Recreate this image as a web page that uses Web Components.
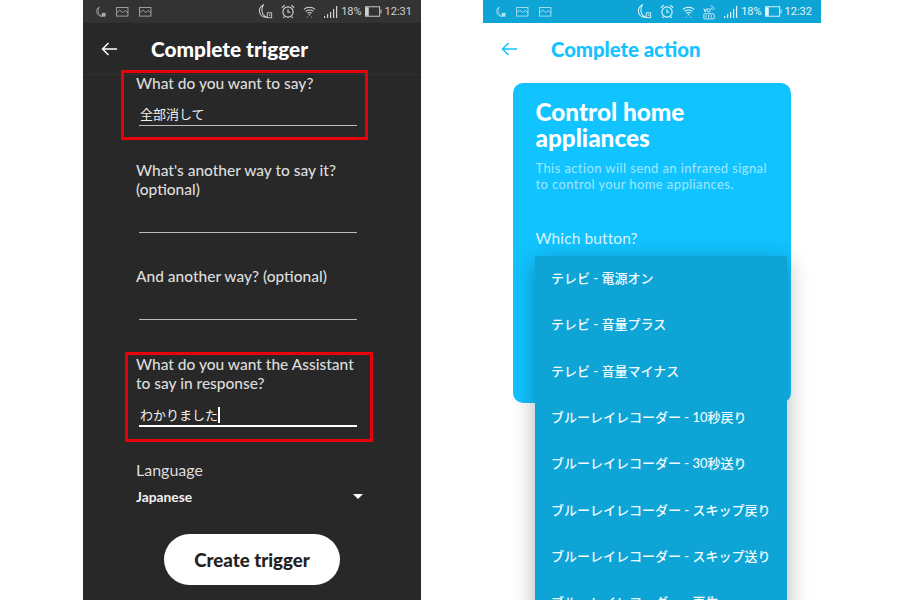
<!DOCTYPE html>
<html lang="en">
<head>
<meta charset="utf-8">
<title>Complete trigger and action</title>
<style>
    html, body { margin: 0; height: 100%; background: #fff; overflow: hidden; }
    body { font-family: Lato, "Noto Sans CJK JP", sans-serif; }
    .page { display: flex; height: 600px; padding-left: 83px; gap: 62px; }
</style>
</head>
<body>
<div class="page">
    <phone-screen style="--bg:#282828">
        <status-bar time="12:31" color="#d0d0d0" bg="#333333"></status-bar>
        <app-header title="Complete trigger" color="#ffffff" size="20.8"></app-header>
        <trigger-form></trigger-form>
    </phone-screen>
    <phone-screen style="--bg:#ffffff">
        <status-bar time="12:32" color="#e4f5fb" bg="#0ea5d6" volte></status-bar>
        <app-header title="Complete action" color="#11c3ff" size="20.3"></app-header>
        <action-card></action-card>
    </phone-screen>
</div>

<script>
const moonIcon = `<svg width="11" height="12" viewBox="0 0 13 14" fill="none" stroke="currentColor" stroke-width="1">
    <path d="M5 1C2.500 2.500 1.500 5 2 7.500C2.600 10.500 5.500 12.500 8.500 12C6 11.500 4 9.500 3.800 6.500C3.700 4.500 4 2.500 5 1Z"/>
    <rect x="8" y="8" width="4.500" height="4.500" fill="currentColor" stroke="none"/></svg>`;
const pictureIcon = `<svg width="13" height="10" viewBox="0 0 14 11" fill="none" stroke="currentColor" stroke-width="1">
    <rect x="0.500" y="0.500" width="12.500" height="9.500"/>
    <path d="M1 6L4 3.500L7 6L10 4L13 6.500"/></svg>`;
const moonBigIcon = `<svg width="15" height="15" viewBox="0 0 17 17" fill="none" stroke="currentColor" stroke-width="1.200">
    <path d="M6 1C2.500 3 1 6.500 2 10C3 13.500 6.500 15.500 10 15C7 14 4.800 11.500 4.500 8C4.300 5.500 4.800 3 6 1Z"/>
    <rect x="10.500" y="10" width="5" height="5.500" stroke-width="1"/><path d="M13 11.500V13H14.200" stroke-width="0.800"/></svg>`;
const alarmIcon = `<svg width="14" height="15" viewBox="0 0 15 16" fill="none" stroke="currentColor" stroke-width="1.200">
    <circle cx="7.500" cy="8.500" r="5.500"/><path d="M7.500 5.500V8.800H10"/>
    <path d="M1 4L4 1.200M14 4L11 1.200M3.500 13.500L2.500 15M11.500 13.500L12.500 15"/></svg>`;
const wifiIcon = `<svg width="13" height="13" viewBox="0 0 15 15" fill="none" stroke="currentColor" stroke-width="1.200">
    <path d="M1 5C4.500 1.800 10.500 1.800 14 5M3 7.300C5.500 5.200 9.500 5.200 12 7.300M5 9.500C6.500 8.400 8.500 8.400 10 9.500"/>
    <circle cx="7.500" cy="11.200" r="0.900" fill="currentColor" stroke="none"/>
    <path d="M4.500 14H5.500M9.500 14H10.500" opacity="0.700"/></svg>`;
const volteIcon = `<svg width="13" height="16" viewBox="0 0 15 18" fill="none" stroke="currentColor" stroke-width="1">
    <path d="M9 2C11 2.500 12.500 4 13 6M9 4.500C10 4.800 10.700 5.500 11 6.500"/>
    <path d="M1 5L2.500 9L4 5" stroke-width="1.100"/><circle cx="6.500" cy="7" r="1.800" stroke-width="1.100"/>
    <rect x="1" y="11" width="12" height="6" rx="1"/><path d="M3.500 12.500V15.500M6.500 12.500V15.500M9.500 12.500V15.500"/></svg>`;
const signalIcon = `<svg width="14" height="12" viewBox="0 0 14 12" fill="currentColor">
    <rect x="0" y="10" width="1.200" height="2"/><rect x="3" y="8" width="1.200" height="4"/>
    <rect x="6" y="6" width="1.200" height="6"/><rect x="9" y="3" width="1.200" height="9"/>
    <rect x="12" y="0" width="1.200" height="12"/></svg>`;
const batteryIcon = `<svg width="17" height="11" viewBox="0 0 18 11" fill="none" stroke="currentColor">
    <rect x="0.500" y="0.500" width="15" height="10"/><rect x="1" y="1" width="3" height="9" fill="currentColor" stroke="none"/>
    <rect x="16.500" y="3.500" width="1" height="4" fill="currentColor" stroke="none"/></svg>`;

class PhoneScreen extends HTMLElement {
    constructor() {
        super();
        this.attachShadow({ mode: 'open' });
        this.shadowRoot.innerHTML = `
            <style>
                :host {
                    display: flex;
                    flex-direction: column;
                    width: 338px;
                    height: 600px;
                    overflow: hidden;
                    background: var(--bg);
                    position: relative;
                }
            </style>
            <slot></slot>
        `;
    }
}

class StatusBar extends HTMLElement {
    constructor() {
        super();
        this.attachShadow({ mode: 'open' });
    }

    connectedCallback() {
        const extra = this.hasAttribute('volte') ? `<span class="icon">${volteIcon}</span>` : '';
        this.shadowRoot.innerHTML = `
            <style>
                :host {
                    display: flex;
                    align-items: center;
                    height: 23px;
                    flex: none;
                    box-sizing: border-box;
                    padding: 0 9px 0 12px;
                    font-family: Roboto, sans-serif;
                    font-size: 11px;
                    background: ${this.getAttribute('bg')};
                    color: ${this.getAttribute('color')};
                }
                .left { display: flex; align-items: center; gap: 10px; opacity: 0.75; }
                .right { display: flex; align-items: center; margin-left: auto; }
                .icon { display: flex; margin-right: 8px; }
                .signal { margin-right: 3px; }
                .pct { margin-right: 3px; }
                .bat { margin-right: 3px; }
                svg { display: block; }
            </style>
            <div class="left">${moonIcon}${pictureIcon}${pictureIcon}</div>
            <div class="right">
                <span class="icon">${moonBigIcon}</span>
                <span class="icon">${alarmIcon}</span>
                <span class="icon">${wifiIcon}</span>
                ${extra}
                <span class="icon signal">${signalIcon}</span>
                <span class="pct">18%</span>
                <span class="icon bat">${batteryIcon}</span>
                <span>${this.getAttribute('time')}</span>
            </div>
        `;
    }
}

class AppHeader extends HTMLElement {
    constructor() {
        super();
        this.attachShadow({ mode: 'open' });
    }

    connectedCallback() {
        this.shadowRoot.innerHTML = `
            <style>
                :host {
                    display: flex;
                    align-items: center;
                    height: 51px;
                    flex: none;
                    box-sizing: border-box;
                    padding-left: 18px;
                    color: ${this.getAttribute('color')};
                }
                svg { display: block; margin-right: 34px; }
                h1 { margin: 0; font-size: ${this.getAttribute('size')}px; font-weight: 900; }
            </style>
            <svg width="16" height="14" viewBox="0 0 16 14" fill="none" stroke="currentColor" stroke-width="1.500">
                <path d="M16 7H1.500M7.500 1L1.500 7L7.500 13"/>
            </svg>
            <h1>${this.getAttribute('title')}</h1>
        `;
    }
}

class TriggerField extends HTMLElement {
    constructor() {
        super();
        this.attachShadow({ mode: 'open' });
    }

    connectedCallback() {
        const active = this.hasAttribute('active');
        this.shadowRoot.innerHTML = `
            <style>
                :host { display: block; color: #dcdcdc; }
                .label { font-size: 15.500px; line-height: 19px; font-weight: 500; }
                .input {
                    margin: ${this.getAttribute('gap') || 12}px 0 0 3px;
                    width: 218px;
                    height: 23px;
                    padding-left: 1px;
                    box-sizing: border-box;
                    border-bottom: ${active ? '2px solid #ffffff' : '1px solid #bdbdbd'};
                    font-size: 13px;
                    line-height: 23px;
                    color: #f0f0f0;
                }
                .caret { display: inline-block; width: 1.500px; height: 16px; background: #fff; vertical-align: -3px; }
            </style>
            <div class="label"><slot></slot></div>
            <div class="input">${this.getAttribute('value') || ''}${active ? '<span class="caret"></span>' : ''}</div>
        `;
    }
}

class TriggerForm extends HTMLElement {
    constructor() {
        super();
        this.attachShadow({ mode: 'open' });
        this.shadowRoot.innerHTML = `
            <style>
                :host {
                    display: flex;
                    flex-direction: column;
                    flex: 1;
                    position: relative;
                    padding: 0 0 0 53px;
                    box-sizing: border-box;
                    border-top: 1px solid #303030;
                }
                .mark { position: absolute; border: 3px solid #e8000c; box-sizing: border-box; }
                .lang { font-size: 16px; line-height: 19px; color: #dcdcdc; margin-top: 33px; }
                .select {
                    display: flex;
                    justify-content: space-between;
                    align-items: center;
                    width: 227px;
                    margin-top: 8px;
                    font-size: 13.800px;
                    line-height: 19px;
                    font-weight: 700;
                    color: #f2f2f2;
                }
                .caret { width: 0; height: 0; border: 5px solid transparent; border-top: 5px solid #fff; border-bottom: 0; }
                .btn {
                    align-self: flex-start;
                    margin: 28px 0 0 28px;
                    width: 176px;
                    height: 51px;
                    border-radius: 26px;
                    background: #fff;
                    color: #222;
                    display: flex;
                    align-items: center;
                    justify-content: center;
                    font-size: 18.700px;
                    font-weight: 900;
                }
            </style>
            <trigger-field style="margin-top:-1px;margin-bottom:35px" value="全部消して" gap="10">What do you want to say?</trigger-field>
            <trigger-field style="margin-bottom:34px" gap="11">What's another way to say it?<br>(optional)</trigger-field>
            <trigger-field style="margin-bottom:35px" gap="11">And another way? (optional)</trigger-field>
            <trigger-field active value="わかりました" gap="11">What do you want the Assistant<br>to say in response?</trigger-field>
            <div class="lang">Language</div>
            <div class="select"><span>Japanese</span><span class="caret"></span></div>
            <div class="btn">Create trigger</div>
            <div class="mark" style="left:38px;top:-5px;width:247px;height:70px"></div>
            <div class="mark" style="left:42px;top:277px;width:248px;height:90px"></div>
        `;
    }
}

class ActionCard extends HTMLElement {
    constructor() {
        super();
        this.attachShadow({ mode: 'open' });
        this.shadowRoot.innerHTML = `
            <style>
                :host { display: block; flex: 1; position: relative; padding: 9px 30px 0; }
                .card {
                    width: 278px;
                    height: 320px;
                    box-sizing: border-box;
                    padding: 16px 22.500px;
                    background: #11c3ff;
                    border-radius: 10px;
                    color: #fff;
                }
                h2 { margin: 0; font-size: 24.300px; line-height: 26px; font-weight: 900; }
                p { margin: 9px 0 0; font-size: 13px; line-height: 16px; color: rgba(255,255,255,0.62); letter-spacing: 0.400px; }
                .which { margin-top: 37px; font-size: 15.500px; line-height: 19px; color: rgba(255,255,255,0.85); letter-spacing: 0.100px; }
                drop-list { position: absolute; left: 52px; top: 182px; }
            </style>
            <div class="card">
                <h2>Control home<br>appliances</h2>
                <p>This action will send an infrared signal<br>to control your home appliances.</p>
                <div class="which">Which button?</div>
            </div>
            <drop-list></drop-list>
        `;
    }
}

class DropList extends HTMLElement {
    constructor() {
        super();
        this.attachShadow({ mode: 'open' });
        const items = [
            'テレビ - 電源オン',
            'テレビ - 音量プラス',
            'テレビ - 音量マイナス',
            'ブルーレイレコーダー - 10秒戻り',
            'ブルーレイレコーダー - 30秒送り',
            'ブルーレイレコーダー - スキップ戻り',
            'ブルーレイレコーダー - スキップ送り',
            'ブルーレイレコーダー - 再生'
        ];
        this.shadowRoot.innerHTML = `
            <style>
                :host {
                    display: block;
                    width: 252px;
                    height: 380px;
                    background: #0ea5d6;
                    box-shadow: 0 6px 22px rgba(0,0,0,0.3);
                }
                div {
                    height: 46.300px;
                    display: flex;
                    align-items: center;
                    padding-left: 16px;
                    font-size: 13px;
                    font-weight: 500;
                    color: #f2fbff;
                    white-space: nowrap;
                }
                div:first-of-type { margin-top: -1.500px; }
            </style>
            ${items.map(item => `<div>${item}</div>`).join('')}
        `;
    }
}

customElements.define('phone-screen', PhoneScreen);
customElements.define('status-bar', StatusBar);
customElements.define('app-header', AppHeader);
customElements.define('trigger-field', TriggerField);
customElements.define('trigger-form', TriggerForm);
customElements.define('action-card', ActionCard);
customElements.define('drop-list', DropList);
</script>
</body>
</html>
